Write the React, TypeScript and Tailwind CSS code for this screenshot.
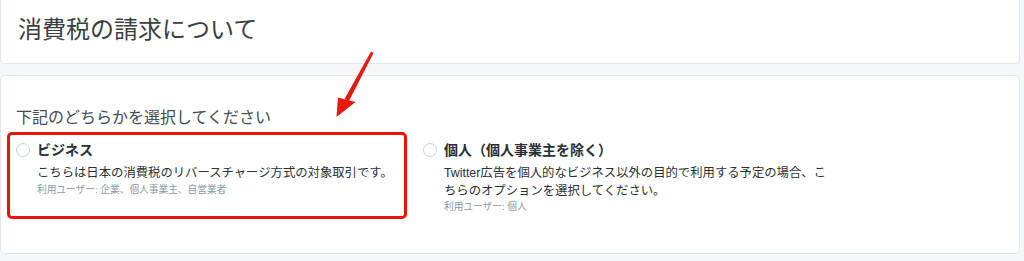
import React from "react";

function Option({
  title,
  children,
  users,
  highlight,
  widthClass,
}: {
  title: string;
  children: React.ReactNode;
  users: string;
  highlight?: boolean;
  widthClass: string;
}) {
  return (
    <div className={`relative flex ${widthClass}`}>
      {highlight && (
        <div className="absolute left-[-9px] top-[-8px] w-[400px] h-[87px] border-[3px] border-[#e3160e] rounded-[5px] pointer-events-none" />
      )}
      <div className="mt-[3px] w-[14px] h-[14px] shrink-0 rounded-full border border-[#c8d2d9] bg-white" />
      <div className="ml-[7px] w-[386px]">
        <div className="text-[14px] leading-[20px] font-bold text-[#292f33]">{title}</div>
        <div className="mt-[5px] text-[12.35px] leading-[17.5px] text-[#292f33]">{children}</div>
        <div className="text-[9.7px] leading-[14px] text-[#8899a6]">{users}</div>
      </div>
    </div>
  );
}

export default function App() {
  return (
    <div className="relative w-[1024px] h-[261px] bg-[#f5f8fa] overflow-hidden pr-[4px] font-['Liberation_Sans','Noto_Sans_CJK_JP',sans-serif]">
      <div className="h-[64px] bg-white border border-t-0 border-[#e1e8ed] rounded-b-[5px] pl-[17px] pt-[14px]">
        <div className="text-[24px] leading-[32px] text-[#3a3f44]">消費税の請求について</div>
      </div>
      <div className="mt-[11px] h-[179px] bg-white border border-[#e1e8ed] rounded-[5px] pt-[30px] pl-[15px]">
        <div className="text-[16px] leading-[24px] text-[#444a50]">下記のどちらかを選択してください</div>
        <div className="mt-[10px] flex">
          <Option
            title="ビジネス"
            users="利用ユーザー: 企業、個人事業主、自営業者"
            highlight
            widthClass="w-[407px]"
          >
            こちらは日本の消費税のリバースチャージ方式の対象取引です。
          </Option>
          <Option title="個人（個人事業主を除く）" users="利用ユーザー: 個人" widthClass="w-[420px]">
            Twitter広告を個人的なビジネス以外の目的で利用する予定の場合、こちらのオプションを選択してください。
          </Option>
        </div>
      </div>
      <svg
        className="absolute left-0 top-0 pointer-events-none"
        width="1024"
        height="261"
        viewBox="0 0 1024 261"
      >
        <polygon points="371,51.5 373.5,53 349,101 344.5,99" fill="#e8170f" />
        <polygon points="338,97.5 355.5,102 336.5,117" fill="#e8170f" />
      </svg>
    </div>
  );
}
